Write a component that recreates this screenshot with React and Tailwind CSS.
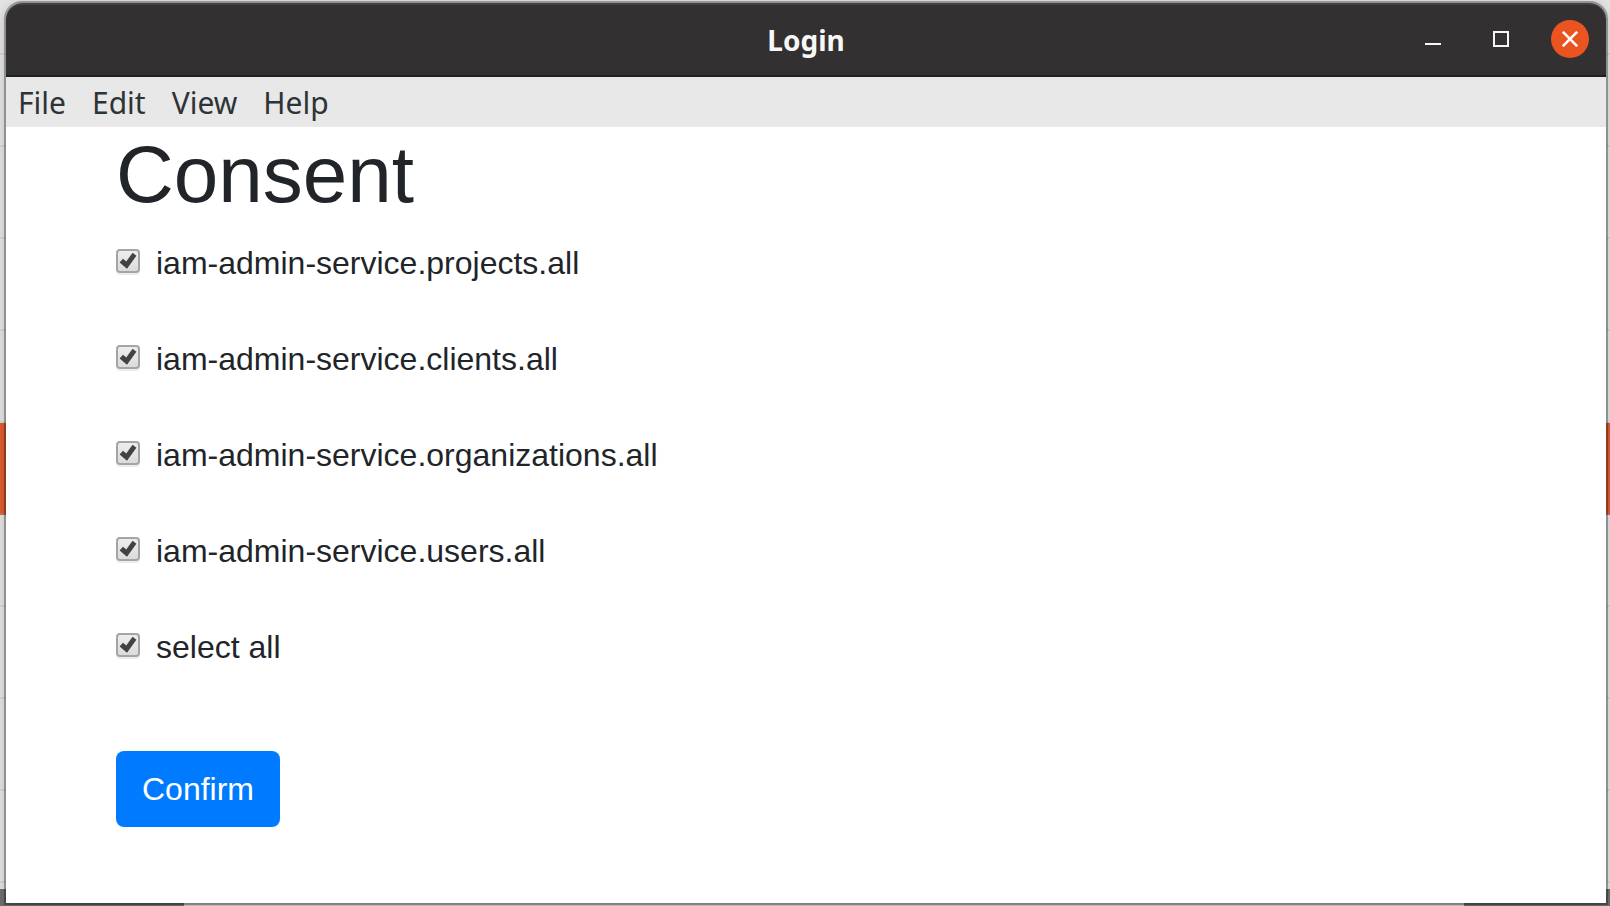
import { useState } from "react";

const MENUS = ["File", "Edit", "View", "Help"];
const SCOPES = [
  "iam-admin-service.projects.all",
  "iam-admin-service.clients.all",
  "iam-admin-service.organizations.all",
  "iam-admin-service.users.all",
];

function Backdrop() {
  const line = "h-[92px] shrink-0 border-b-2 border-[#d4d4d4]";
  return (
    <div aria-hidden="true" className="absolute inset-0 flex flex-col overflow-hidden bg-[#6f6e6f]">
      <div className="flex h-[889px] shrink-0 flex-col overflow-hidden bg-[#e2e2e2]">
        <div className="h-[55px] shrink-0 border-b-2 border-[#d4d4d4]" />
        <div className={line} />
        <div className={line} />
        <div className={line} />
        <div className={line} />
        <div className="h-[92px] shrink-0 border-b-2 border-[#c87056] bg-[#dc5c30]" />
        <div className={line} />
        <div className={line} />
        <div className={line} />
        <div className={line} />
      </div>
      <div className="ml-[184px] mr-[146px] flex-1 bg-[#d0d0d0]" />
    </div>
  );
}

function TitleBar() {
  return (
    <header className="grid h-[74px] grid-cols-[1fr_auto_1fr] items-center rounded-t-2xl border-b-2 border-t-2 border-b-[#231f20] border-t-[#434243] bg-[#323030]">
      <span />
      <h2 className="font-['Noto_Sans',sans-serif] text-[28px] leading-9 font-bold text-[#f7f7f7]">Login</h2>
      <div className="flex items-center justify-end gap-8 pr-[17px] pb-0.5">
        <button type="button" aria-label="Minimize" className="flex size-9 items-center justify-center">
          <svg viewBox="0 0 16 16" className="size-4" shapeRendering="crispEdges">
            <path d="M0 12h16v2H0z" fill="#f7f7f7" />
          </svg>
        </button>
        <button type="button" aria-label="Maximize" className="flex size-9 items-center justify-center">
          <svg viewBox="0 0 16 16" className="size-4">
            <rect x="1" y="1" width="14" height="14" fill="none" stroke="#f7f7f7" strokeWidth="2" />
          </svg>
        </button>
        <button type="button" aria-label="Close" className="flex size-[38px] items-center justify-center rounded-full bg-[#e95420]">
          <svg viewBox="0 0 16 16" className="size-4" fill="none" stroke="#fff" strokeWidth="2.6">
            <path d="M.8.8l14.4 14.4M15.2.8L.8 15.2" />
          </svg>
        </button>
      </div>
    </header>
  );
}

function ScopeCheck({ label, checked, onChange }) {
  return (
    <label className="flex w-fit items-center gap-4">
      <span className="grid size-6 -translate-y-0.5 place-items-center">
        <input
          type="checkbox"
          checked={checked}
          onChange={onChange}
          className="col-start-1 row-start-1 size-6 appearance-none rounded-sm border-2 border-[#a5a5a5] bg-linear-to-b from-[#ededed] to-[#dcdcdc] shadow-[0_2px_1px_rgba(0,0,0,0.08)]"
        />
        {checked && (
          <svg viewBox="0 0 24 24" className="pointer-events-none col-start-1 row-start-1 size-6">
            <path d="M3.6 13.4l3.4-3.6 3.2 2.7L16.6 3.8l3.8 3-9.4 13z" fill="#424242" />
          </svg>
        )}
      </span>
      <span>{label}</span>
    </label>
  );
}

export default function App() {
  const [granted, setGranted] = useState(SCOPES);
  const all = granted.length === SCOPES.length;
  const toggle = (scope) =>
    setGranted(granted.includes(scope) ? granted.filter((s) => s !== scope) : [...granted, scope]);

  return (
    <div className="relative flex min-h-screen flex-col pt-[3px] pr-1 pb-[3px] pl-1.5">
      <Backdrop />
      <div className="relative flex flex-1 flex-col rounded-t-2xl bg-white shadow-[0_0_0_2px_rgba(0,0,0,0.3),0_2px_12px_rgba(0,0,0,0.2)]">
        <TitleBar />
        <nav className="flex h-[50px] items-center gap-[26px] bg-[#e8e8e8] px-3 pt-0.5 font-['Noto_Sans',sans-serif] text-[30px] leading-9 text-[#2e3436]">
          {MENUS.map((m) => (
            <button key={m} type="button">{m}</button>
          ))}
        </nav>
        <main className="px-[110px] pb-[76px] font-['Liberation_Sans',sans-serif] text-[32px] leading-[48px] text-[#212529]">
          <h1 className="mb-4 text-[80px] leading-[96px]">Consent</h1>
          <form onSubmit={(e) => e.preventDefault()}>
            <div className="flex flex-col gap-12">
              {SCOPES.map((s) => (
                <ScopeCheck key={s} label={s} checked={granted.includes(s)} onChange={() => toggle(s)} />
              ))}
              <ScopeCheck label="select all" checked={all} onChange={() => setGranted(all ? [] : SCOPES)} />
            </div>
            <button type="submit" className="mt-20 h-[76px] rounded-lg bg-[#007bff] px-[26px] text-white">
              Confirm
            </button>
          </form>
        </main>
      </div>
    </div>
  );
}
